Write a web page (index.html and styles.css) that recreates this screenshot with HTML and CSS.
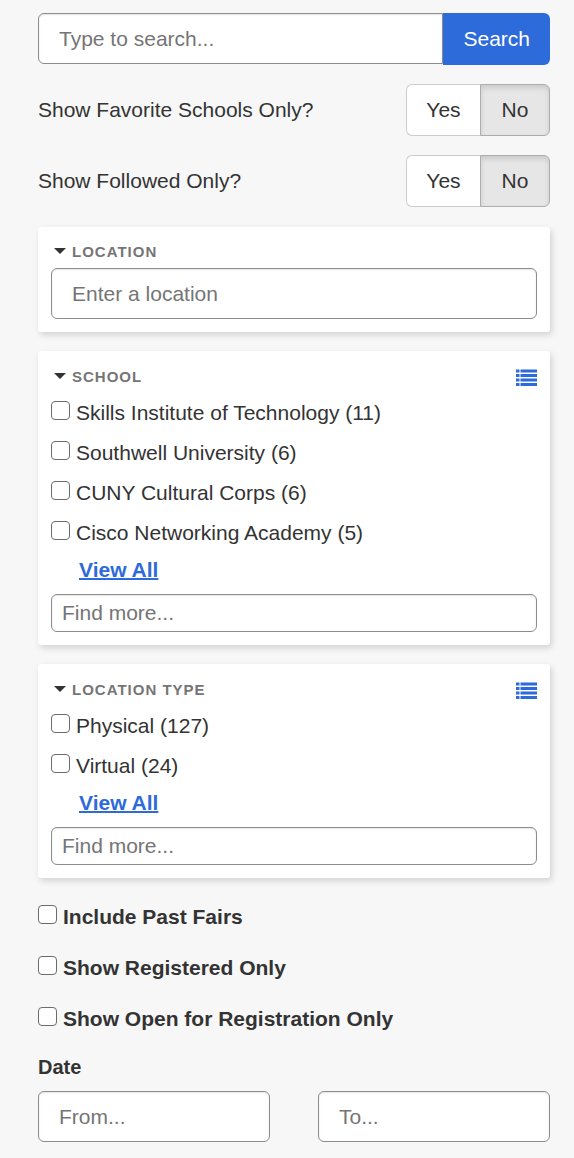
FILE: index.html
```html
<!DOCTYPE html>
<html lang="en">

<head>
  <meta charset="UTF-8" />
  <meta name="viewport" content="width=device-width, initial-scale=1.0" />
  <title>Fairs</title>
  <link rel="stylesheet" href="styles.css">
</head>

<body>

  <form class="filters">
    <div class="search-bar">
      <input type="text" class="field" placeholder="Type to search..." aria-label="Search">
      <button type="submit" class="search-button">Search</button>
    </div>

    <div class="toggle-row">
      <span id="favorite-label">Show Favorite Schools Only?</span>
      <div class="toggle" role="group" aria-labelledby="favorite-label">
        <button type="button" aria-pressed="false">Yes</button>
        <button type="button" class="active" aria-pressed="true">No</button>
      </div>
    </div>

    <div class="toggle-row">
      <span id="followed-label">Show Followed Only?</span>
      <div class="toggle" role="group" aria-labelledby="followed-label">
        <button type="button" aria-pressed="false">Yes</button>
        <button type="button" class="active" aria-pressed="true">No</button>
      </div>
    </div>

    <div class="cards">
      <section class="card">
        <h2 class="card-header"><span class="caret"></span><span class="card-title">Location</span></h2>
        <input type="text" class="field" placeholder="Enter a location" aria-label="Location">
      </section>

      <section class="card card-list">
        <h2 class="card-header">
          <span class="caret"></span><span class="card-title">School</span>
          <svg class="list-icon" width="21" height="17" viewBox="0 0 21 17">
            <path d="M0 .5h3.500v3H0zM4.500 .5H21v3H4.500zM0 5h3.500v3H0zM4.500 5H21v3H4.500zM0 9.500h3.500v3H0zM4.500 9.500H21v3H4.500zM0 14h3.500v3H0zM4.500 14H21v3H4.500z" />
          </svg>
        </h2>
        <label class="option"><input type="checkbox">Skills Institute of Technology (11)</label>
        <label class="option"><input type="checkbox">Southwell University (6)</label>
        <label class="option"><input type="checkbox">CUNY Cultural Corps (6)</label>
        <label class="option"><input type="checkbox">Cisco Networking Academy (5)</label>
        <a class="view-all" href="#">View All</a>
        <input type="text" class="field field-small" placeholder="Find more..." aria-label="Find more schools">
      </section>

      <section class="card card-list">
        <h2 class="card-header">
          <span class="caret"></span><span class="card-title">Location Type</span>
          <svg class="list-icon" width="21" height="17" viewBox="0 0 21 17">
            <path d="M0 .5h3.500v3H0zM4.500 .5H21v3H4.500zM0 5h3.500v3H0zM4.500 5H21v3H4.500zM0 9.500h3.500v3H0zM4.500 9.500H21v3H4.500zM0 14h3.500v3H0zM4.500 14H21v3H4.500z" />
          </svg>
        </h2>
        <label class="option"><input type="checkbox">Physical (127)</label>
        <label class="option"><input type="checkbox">Virtual (24)</label>
        <a class="view-all" href="#">View All</a>
        <input type="text" class="field field-small" placeholder="Find more..." aria-label="Find more location types">
      </section>
    </div>

    <div class="extra-options">
      <label class="option"><input type="checkbox">Include Past Fairs</label>
      <label class="option"><input type="checkbox">Show Registered Only</label>
      <label class="option"><input type="checkbox">Show Open for Registration Only</label>
    </div>

    <fieldset class="dates">
      <legend>Date</legend>
      <div class="date-fields">
        <input type="text" class="field" placeholder="From..." aria-label="From date">
        <input type="text" class="field" placeholder="To..." aria-label="To date">
      </div>
    </fieldset>
  </form>

</body>

</html>
```
FILE: styles.css
```css
* {
  box-sizing: border-box;
}

body {
  margin: 0;
  background: #f7f7f7;
  color: #333;
  font-family: "Liberation Sans", Arial, sans-serif;
  font-size: 21px;
  line-height: 28px;
}

input,
button {
  font: inherit;
  color: inherit;
}

.filters {
  display: flex;
  flex-direction: column;
  gap: 19px;
  padding: 13px 24px 16px 38px;
}

/* Text boxes */
.field {
  display: block;
  width: 100%;
  min-width: 0;
  height: 51px;
  padding: 0 20px;
  background: #fff;
  border: 1px solid #8c8c8c;
  border-radius: 6px;
  box-shadow: inset 0 1px 2px rgba(0, 0, 0, 0.1);
}

.field::placeholder {
  color: #757575;
  opacity: 1;
}

.field-small {
  height: 38px;
  padding: 0 10px;
}

.search-bar {
  display: flex;
  align-items: flex-start;
}

.search-bar .field {
  flex: 1;
  border-radius: 6px 0 0 6px;
}

.search-button {
  height: 52px;
  padding: 0 20px;
  background: #2d6bdb;
  color: #fff;
  border: 0;
  border-radius: 0 6px 6px 0;
  cursor: pointer;
}

/* Yes / No */
.toggle-row {
  display: flex;
  justify-content: space-between;
  align-items: center;
}

.toggle {
  display: flex;
}

.toggle button {
  height: 52px;
  width: 74px;
  padding: 0;
  background: #fff;
  border: 1px solid #ccc;
  border-right: 0;
  border-radius: 6px 0 0 6px;
  cursor: pointer;
}

.toggle .active {
  width: 70px;
  background: #e6e6e6;
  border: 1px solid #adadad;
  border-radius: 0 6px 6px 0;
  box-shadow: inset 0 3px 5px rgba(0, 0, 0, 0.12);
}

/* Filter cards */
.cards {
  display: flex;
  flex-direction: column;
  gap: 19px;
  padding-top: 1px;
}

.card {
  padding: 13px;
  background: #fff;
  border-radius: 3px;
  box-shadow: 2px 3px 6px rgba(0, 0, 0, 0.15);
}

.card-list {
  padding-top: 14px;
}

.card-header {
  display: flex;
  align-items: center;
  height: 24px;
  margin: 0 0 4px;
  padding-left: 3px;
  color: #757575;
  font-size: 15px;
  line-height: 24px;
  letter-spacing: 1px;
  text-transform: uppercase;
}

.caret {
  margin: 0 6px 2px 0;
  border: 6px solid transparent;
  border-top-color: #333;
  border-bottom: 0;
}

.list-icon {
  margin-left: auto;
  fill: #2d6bdb;
}

.option {
  display: flex;
  align-items: center;
  height: 40px;
}

.option input {
  appearance: none;
  flex: none;
  width: 19px;
  height: 19px;
  margin: 0 6px 6px 0;
  background: #fff;
  border: 1px solid #6b6b6b;
  border-radius: 4px;
}

.option input:checked {
  background: #2d6bdb;
}

.view-all {
  display: block;
  width: max-content;
  margin: 3px 0 10px 28px;
  color: #2d6bdb;
  font-weight: bold;
  text-decoration-thickness: 2px;
}

.extra-options {
  display: flex;
  flex-direction: column;
  gap: 21px;
  padding-top: 5px;
  font-weight: bold;
}

.extra-options .option {
  height: 30px;
}

/* Date range */
.dates {
  margin: 0;
  padding: 0;
  border: 0;
}

.dates legend {
  margin-bottom: 10px;
  padding: 0;
  font-size: 20px;
  font-weight: bold;
}

.date-fields {
  display: grid;
  grid-template-columns: 1fr 1fr;
  gap: 48px;
}
```
